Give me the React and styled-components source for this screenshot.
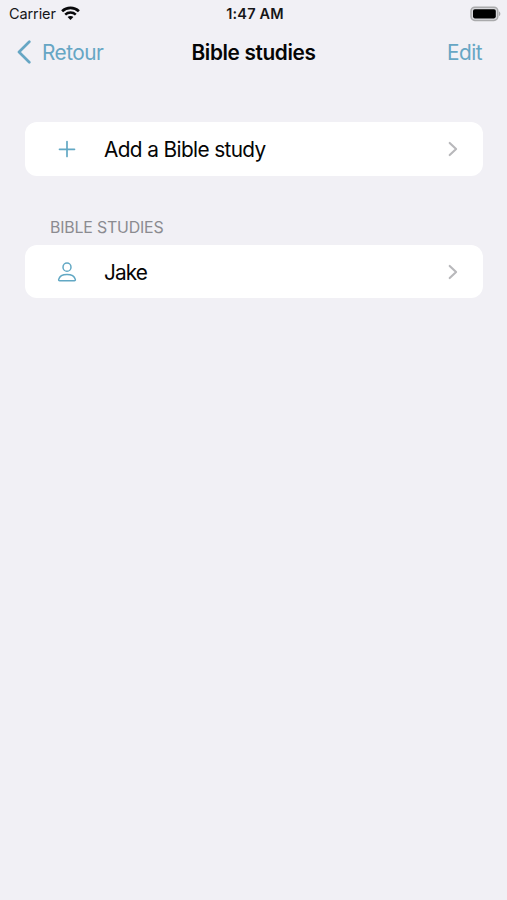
import React from 'react';
import styled, { createGlobalStyle } from 'styled-components';

const GlobalStyle = createGlobalStyle`
  * {
    box-sizing: border-box;
  }

  body {
    margin: 0;
    background: #f1f0f5;
    font-family: Inter, 'Liberation Sans', sans-serif;
  }
`;

const Screen = styled.div`
  min-height: 100vh;
  background: #f1f0f5;
  color: #050505;
`;

const StatusBar = styled.div`
  display: grid;
  grid-template-columns: 1fr auto 1fr;
  align-items: center;
  height: 28px;
  padding: 0 6px 0 9px;
  font-size: 14.5px;
  line-height: 28px;
  color: #161618;
`;

const Carrier = styled.div`
  display: flex;
  align-items: center;
  gap: 5px;
  letter-spacing: -0.1px;

  svg {
    margin-top: -2px;
  }
`;

const Clock = styled.div`
  font-weight: 600;
  letter-spacing: 0.15px;
`;

const Battery = styled.div`
  display: flex;
  justify-content: flex-end;
`;

const NavBar = styled.header`
  display: grid;
  grid-template-columns: 1fr auto 1fr;
  align-items: center;
  height: 48px;
  padding: 0 25px 0 17px;
`;

const NavButton = styled.button`
  display: flex;
  align-items: center;
  justify-self: ${props => props.$align || 'start'};
  gap: 10px;
  padding: 0;
  background: none;
  border: none;
  color: #66a6c4;
  font-family: inherit;
  font-size: 20.8px;
  letter-spacing: -0.5px;
  line-height: 28px;
  cursor: pointer;

  span {
    padding-top: 2px;
  }
`;

const Title = styled.h1`
  margin: 0;
  padding: 2px 0 0 8px;
  font-size: 20.8px;
  font-weight: 600;
  letter-spacing: -0.37px;
  line-height: 28px;
`;

const Content = styled.main`
  padding: 46px 24px 0 25px;
`;

const SectionLabel = styled.h2`
  margin: 0;
  padding: 42px 0 7px 25px;
  color: #8b8b90;
  font-size: 15.9px;
  font-weight: 400;
  letter-spacing: -0.18px;
  line-height: 20px;
`;

const Row = styled.div`
  display: flex;
  align-items: center;
  height: ${props => props.$height}px;
  padding: 0 25px 0 31px;
  background: white;
  border-radius: 12px;
  cursor: pointer;
`;

const RowIcon = styled.span`
  display: flex;
  width: 48px;
  color: #62a8c4;
`;

const RowLabel = styled.span`
  flex: 1;
  padding-top: 2px;
  font-size: 20.8px;
  letter-spacing: ${props => props.$spacing || '-0.62px'};
  line-height: 28px;
`;

const WifiIcon = () => (
  <svg width="19" height="15" viewBox="0 0 19 15" fill="none" stroke="#08080a">
    <path d="M1.1 5.2C5.8 .8 13.2 .8 17.9 5.2" strokeWidth="2.7" />
    <path d="M4.2 8.6C7.2 5.8 11.8 5.8 14.8 8.6" strokeWidth="2.5" />
    <path d="M6.6 11C8.2 9.5 10.8 9.5 12.4 11L9.5 14Z" fill="#08080a" stroke="none" />
  </svg>
);

const BatteryIcon = () => (
  <svg width="31" height="16" viewBox="0 0 31 16">
    <rect x="1" y="1.2" width="26.8" height="13.2" rx="3.8" fill="#d8d8dc" stroke="#aaaaac" strokeWidth="1.5" />
    <rect x="3" y="3.2" width="22.8" height="9.2" rx="1.8" fill="#000" />
    <path d="M29 5.5C30.8 6.2 30.8 9.4 29 10.1Z" fill="#a8a8aa" />
  </svg>
);

const BackIcon = () => (
  <svg width="15" height="24" viewBox="0 0 15 24" fill="none" stroke="currentColor" strokeWidth="2.7" strokeLinecap="round" strokeLinejoin="round">
    <path d="M12.3 1.8L2 12L12.3 22.2" />
  </svg>
);

const PlusIcon = () => (
  <svg width="22" height="22" viewBox="0 0 22 22" fill="none" stroke="currentColor" strokeWidth="1.7" strokeLinecap="round">
    <path d="M11 3.5V18.5M3.5 11.3H18.5" />
  </svg>
);

const PersonIcon = () => (
  <svg width="22" height="22" viewBox="0 0 22 22" fill="none" stroke="currentColor" strokeWidth="1.5" strokeLinejoin="round">
    <ellipse cx="11" cy="6.2" rx="4" ry="4.1" />
    <path d="M3.7 19.8C2.8 19.8 2.5 19.2 2.7 18.4C3.5 15.4 6.8 13.5 11 13.5C15.2 13.5 18.5 15.4 19.3 18.4C19.5 19.2 19.2 19.8 18.3 19.8Z" />
  </svg>
);

const ChevronIcon = () => (
  <svg width="10" height="16" viewBox="0 0 10 16" fill="none" stroke="#b8b8bb" strokeWidth="2.1" strokeLinecap="round" strokeLinejoin="round">
    <path d="M1.7 1.9L8.1 8L1.7 14.1" />
  </svg>
);

const App = () => {
  return (
    <Screen>
      <GlobalStyle />
      <StatusBar>
        <Carrier>
          Carrier
          <WifiIcon />
        </Carrier>
        <Clock>1:47 AM</Clock>
        <Battery>
          <BatteryIcon />
        </Battery>
      </StatusBar>

      <NavBar>
        <NavButton>
          <BackIcon />
          <span>Retour</span>
        </NavButton>
        <Title>Bible studies</Title>
        <NavButton $align="end">
          <span>Edit</span>
        </NavButton>
      </NavBar>

      <Content>
        <Row $height={54}>
          <RowIcon>
            <PlusIcon />
          </RowIcon>
          <RowLabel>Add a Bible study</RowLabel>
          <ChevronIcon />
        </Row>

        <SectionLabel>BIBLE STUDIES</SectionLabel>
        <Row $height={53}>
          <RowIcon>
            <PersonIcon />
          </RowIcon>
          <RowLabel $spacing="-0.95px">Jake</RowLabel>
          <ChevronIcon />
        </Row>
      </Content>
    </Screen>
  );
};

export default App;
